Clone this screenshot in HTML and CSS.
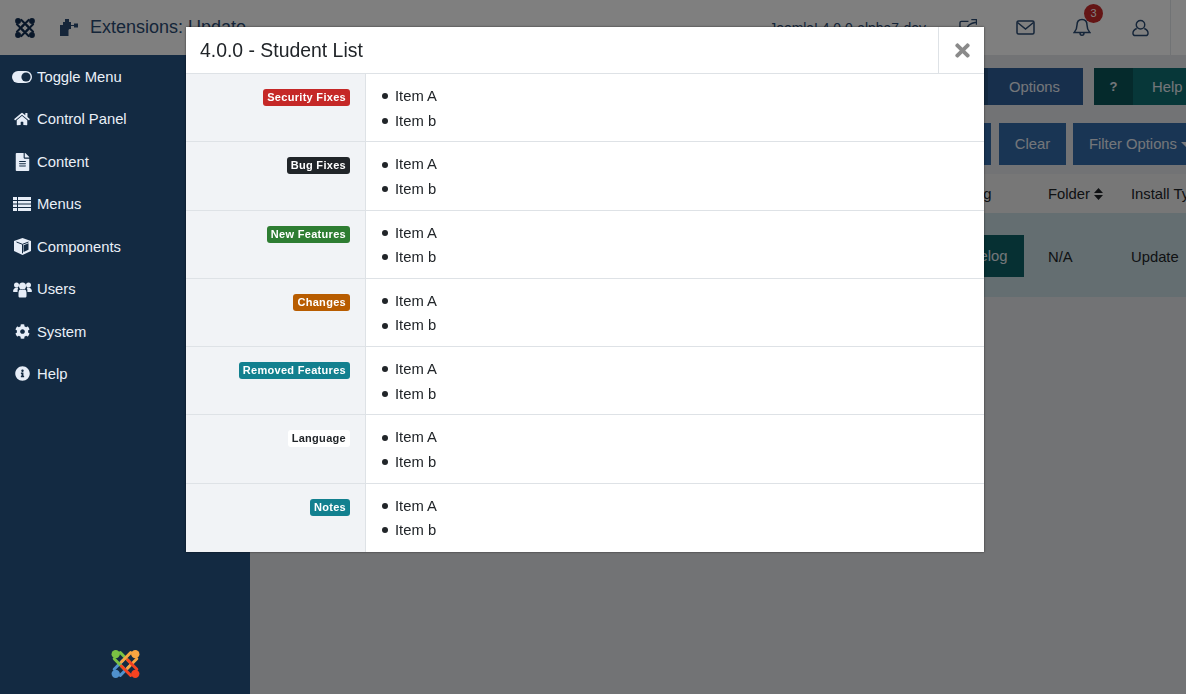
FILE: index.html
```html
<!DOCTYPE html>
<html lang="en">
<head>
<meta charset="utf-8">
<title>Extensions: Update</title>
<link rel="stylesheet" href="styles.css">
</head>
<body>
<svg class="defs" width="0" height="0" aria-hidden="true">
  <symbol id="jlogo" viewBox="0 0 30 30">
    <g fill="none" stroke-width="2.800" stroke-linecap="round">
      <path class="j-d" d="M4 20L13 11M10 26L19 17"/>
      <path class="j-a" d="M10 4L19 13M4 10L13 19"/>
      <path class="j-b" d="M20 4L11 13M26 10L17 19"/>
      <path class="j-c" d="M20 26L11 17M26 20L17 11"/>
    </g>
    <circle class="j-a-dot" cx="5.500" cy="5.500" r="4"/>
    <circle class="j-b-dot" cx="24.500" cy="5.500" r="4"/>
    <circle class="j-c-dot" cx="24.500" cy="24.500" r="4"/>
    <circle class="j-d-dot" cx="5.500" cy="24.500" r="4"/>
  </symbol>
</svg>

<div class="app">
  <header class="topbar">
    <div class="brand"><svg class="logo-mono" width="22" height="22"><use href="#jlogo"/></svg></div>
    <div class="page-title">
      <svg class="puzzle" width="18" height="17" viewBox="0 0 18 17"><path d="M5 0h4v3h2v3h3v-1.500h4v4h-4V7h-3v3h-1c-1 0-1.500.5-1.500 1.500V17H0V6h3V3h2z"/></svg>
      <span>Extensions: Update</span>
    </div>
    <div class="version">Joomla! 4.0.0-alpha7-dev</div>
    <div class="tools">
      <svg class="tool tool-ext" width="18" height="17" viewBox="0 0 19 18"><path d="M10 2.500H2.500A1.500 1.500 0 0 0 1 4v11.500A1.500 1.500 0 0 0 2.500 17h12a1.500 1.500 0 0 0 1.500-1.500V12.500M8 11c.5-3.500 4-6.500 10-7.500M13 .5h5.500V6"/></svg>
      <svg class="tool tool-mail" width="19" height="15" viewBox="0 0 19 15"><rect x="1" y="1" width="17" height="13" rx="1.500"/><path d="M1.500 2.500l8 6.500 8-6.500"/></svg>
      <div class="bell-wrap">
        <svg class="tool" width="18" height="19" viewBox="0 0 18 19"><path d="M9 1.500c-3.500 0-5 2.500-5 5.500 0 4-1 5.500-2.800 7.500h15.600C15 12.500 14 11 14 7c0-3-1.500-5.500-5-5.500zM7 15c0 3 4 3 4 0"/></svg>
        <span class="count">3</span>
      </div>
      <svg class="tool" width="17" height="18" viewBox="0 0 18 18"><circle cx="9" cy="5.500" r="4.500"/><path d="M5 9.500C2.500 10.500 1 12 1 14.500 1 16 2 17 3.500 17h11c1.500 0 2.500-1 2.500-2.500 0-2.500-1.500-4-4-5"/></svg>
      <div class="tool-sep"></div>
    </div>
  </header>

  <div class="body-row">
    <nav class="sidebar">
      <ul class="menu">
        <li class="menu-item"><span class="mi"><svg width="20" height="12" viewBox="0 0 20 12"><rect width="20" height="12" rx="6" class="fill-light"/><circle cx="14" cy="6" r="4.600" class="fill-dark"/></svg></span>Toggle Menu</li>
        <li class="menu-item"><span class="mi"><svg width="16" height="14" viewBox="0 0 576 512"><path class="fill-light" d="M280.37 148.26L96 300.11V464a16 16 0 0 0 16 16l112.06-.29a16 16 0 0 0 15.92-16V368a16 16 0 0 1 16-16h64a16 16 0 0 1 16 16v95.64a16 16 0 0 0 16 16.05L464 480a16 16 0 0 0 16-16V300L295.67 148.26a12.19 12.19 0 0 0-15.3 0zM571.6 251.47L488 182.56V44.05a12 12 0 0 0-12-12h-56a12 12 0 0 0-12 12v72.61L318.47 43a48 48 0 0 0-61 0L4.34 251.47a12 12 0 0 0-1.6 16.9l25.5 31A12 12 0 0 0 45.15 301l235.22-193.74a12.19 12.19 0 0 1 15.3 0L530.9 301a12 12 0 0 0 16.9-1.6l25.5-31a12 12 0 0 0-1.700-16.93z"/></svg></span>Control Panel</li>
        <li class="menu-item"><span class="mi"><svg width="15" height="18" viewBox="0 0 384 512"><path class="fill-light" d="M224 136V0H24C10.7 0 0 10.7 0 24v464c0 13.300 10.700 24 24 24h336c13.300 0 24-10.700 24-24V160H248c-13.200 0-24-10.800-24-24zm64 236c0 6.600-5.400 12-12 12H108c-6.600 0-12-5.400-12-12v-8c0-6.600 5.400-12 12-12h168c6.600 0 12 5.400 12 12v8zm0-64c0 6.600-5.400 12-12 12H108c-6.600 0-12-5.400-12-12v-8c0-6.600 5.400-12 12-12h168c6.600 0 12 5.400 12 12v8zm0-72v8c0 6.600-5.400 12-12 12H108c-6.600 0-12-5.400-12-12v-8c0-6.600 5.400-12 12-12h168c6.600 0 12 5.400 12 12zm96-114.100v6.100H256V0h6.100c6.400 0 12.500 2.500 17 7l97.900 98c4.500 4.500 7 10.600 7 16.900z"/></svg></span>Content</li>
        <li class="menu-item"><span class="mi"><svg width="18" height="14" viewBox="0 0 18 14"><rect width="18" height="14" class="fill-light"/><path class="stroke-dark" d="M0 3.500h18M0 7h18M0 10.500h18M4.500 0v14"/></svg></span>Menus</li>
        <li class="menu-item"><span class="mi"><svg width="17" height="17" viewBox="0 0 17 17"><path class="fill-light" d="M8.500 0L17 3v10l-8.500 4L0 13V3z"/><path class="stroke-dark" d="M2.500 4l6 2.300 6-2.300M8.500 6.300v9"/><path class="fill-dark" d="M9.500 7.200l5-1.900v6.400l-5 2.400z"/></svg></span>Components</li>
        <li class="menu-item"><span class="mi"><svg width="19" height="17" viewBox="0 0 19 17"><g class="fill-light"><circle cx="3.500" cy="4" r="2.500"/><circle cx="15.500" cy="4" r="2.500"/><circle cx="9.500" cy="5" r="3.500"/><path d="M0 11c0-3 1.500-4.500 4-4.500 .5 0 1 .2 1.200 .4-.5 1-.7 2-.6 4.100H1c-.6 0-1-.2-1-.5zM19 11c0-3-1.500-4.500-4-4.500-.5 0-1 .2-1.200 .4 .5 1 .7 2 .6 4.100H18c.6 0 1-.2 1-.5z"/><path d="M5.500 12c0-2.500 1-3.500 2-3.500 1.300 .7 2.700 .7 4 0 1 0 2 1 2 3.500v3c0 1-.7 1.500-1.500 1.500H7c-.8 0-1.500-.5-1.500-1.500z"/></g></svg></span>Users</li>
        <li class="menu-item"><span class="mi"><svg width="15" height="15" viewBox="0 0 512 512"><path class="fill-light" d="M487.400 315.700l-42.600-24.600c4.300-23.200 4.300-47 0-70.200l42.600-24.600c4.900-2.800 7.100-8.600 5.500-14-11.100-35.600-30-67.800-54.700-94.600-3.800-4.100-10-5.100-14.800-2.300L380.800 110c-17.900-15.400-38.500-27.300-60.800-35.100V25.800c0-5.600-3.900-10.500-9.400-11.700-36.700-8.200-74.300-7.800-109.200 0-5.500 1.200-9.400 6.100-9.400 11.700V75c-22.200 7.900-42.800 19.800-60.800 35.100L88.700 85.500c-4.900-2.800-11-1.900-14.800 2.300-24.700 26.700-43.600 58.900-54.700 94.600-1.700 5.400.6 11.200 5.500 14L67.300 221c-4.300 23.200-4.300 47 0 70.200l-42.600 24.600c-4.900 2.800-7.100 8.600-5.500 14 11.100 35.600 30 67.800 54.700 94.600 3.800 4.100 10 5.100 14.800 2.300l42.600-24.600c17.900 15.400 38.500 27.300 60.800 35.100v49.200c0 5.600 3.900 10.500 9.400 11.700 36.700 8.200 74.300 7.800 109.200 0 5.500-1.200 9.400-6.100 9.400-11.700v-49.200c22.200-7.900 42.800-19.800 60.800-35.100l42.600 24.600c4.900 2.800 11 1.900 14.800-2.300 24.700-26.700 43.600-58.900 54.700-94.600 1.500-5.500-.7-11.300-5.600-14.100zM256 336c-44.100 0-80-35.900-80-80s35.900-80 80-80 80 35.900 80 80-35.900 80-80 80z"/></svg></span>System</li>
        <li class="menu-item"><span class="mi"><svg width="15" height="15" viewBox="0 0 512 512"><path class="fill-light" d="M256 8C119.043 8 8 119.083 8 256c0 136.997 111.043 248 248 248s248-111.003 248-248C504 119.083 392.957 8 256 8zm0 110c23.196 0 42 18.804 42 42s-18.804 42-42 42-42-18.804-42-42 18.804-42 42-42zm56 254c0 6.627-5.373 12-12 12h-88c-6.627 0-12-5.373-12-12v-24c0-6.627 5.373-12 12-12h12v-64h-12c-6.627 0-12-5.373-12-12v-24c0-6.627 5.373-12 12-12h64c6.627 0 12 5.373 12 12v100h12c6.627 0 12 5.373 12 12v24z"/></svg></span>Help</li>
      </ul>
      <div class="side-logo"><svg class="logo-color" width="31" height="32"><use href="#jlogo"/></svg></div>
    </nav>

    <main class="content">
      <div class="toolbar">
        <div class="btn btn-options"><span class="btn-icon"></span><span class="btn-text">Options</span></div>
        <div class="btn btn-help"><span class="btn-icon">?</span><span class="btn-text">Help</span></div>
      </div>
      <div class="filters">
        <div class="btn-plain btn-search"></div>
        <div class="btn-plain btn-clear">Clear</div>
        <div class="btn-plain btn-filter">Filter Options<span class="caret"></span></div>
      </div>
      <div class="grid grid-head">
        <div></div>
        <div>Changelog</div>
        <div class="sortable">Folder<svg width="9" height="12" viewBox="0 0 9 12"><path d="M4.500 0L9 5H0zM4.500 12L0 7h9z"/></svg></div>
        <div>Install Type</div>
      </div>
      <div class="grid grid-row">
        <div></div>
        <div><span class="btn-changelog">Changelog</span></div>
        <div class="cell-text">N/A</div>
        <div class="cell-text">Update</div>
      </div>
    </main>
  </div>
</div>

<div class="backdrop"></div>

<section class="modal">
  <div class="modal-head">
    <h3 class="modal-title">4.0.0 - Student List</h3>
    <div class="modal-close"><svg width="15" height="21" viewBox="0 0 352 512"><path d="M242.720 256l100.070-100.070c12.280-12.280 12.280-32.190 0-44.480l-22.240-22.240c-12.280-12.280-32.190-12.280-44.480 0L176 189.280 75.930 89.210c-12.280-12.280-32.190-12.280-44.480 0L9.210 111.450c-12.280 12.280-12.280 32.190 0 44.480L109.280 256 9.210 356.070c-12.280 12.280-12.280 32.190 0 44.480l22.240 22.240c12.280 12.280 32.200 12.280 44.480 0L176 322.720l100.070 100.070c12.280 12.280 32.200 12.280 44.480 0l22.240-22.240c12.280-12.280 12.280-32.190 0-44.480L242.720 256z"/></svg></div>
  </div>
  <div class="log-row">
    <div class="log-label"><span class="badge b-red">Security Fixes</span></div>
    <ul class="log-list"><li>Item A</li><li>Item b</li></ul>
  </div>
  <div class="log-row">
    <div class="log-label"><span class="badge b-black">Bug Fixes</span></div>
    <ul class="log-list"><li>Item A</li><li>Item b</li></ul>
  </div>
  <div class="log-row">
    <div class="log-label"><span class="badge b-green">New Features</span></div>
    <ul class="log-list"><li>Item A</li><li>Item b</li></ul>
  </div>
  <div class="log-row">
    <div class="log-label"><span class="badge b-orange">Changes</span></div>
    <ul class="log-list"><li>Item A</li><li>Item b</li></ul>
  </div>
  <div class="log-row">
    <div class="log-label"><span class="badge b-teal">Removed Features</span></div>
    <ul class="log-list"><li>Item A</li><li>Item b</li></ul>
  </div>
  <div class="log-row">
    <div class="log-label"><span class="badge b-white">Language</span></div>
    <ul class="log-list"><li>Item A</li><li>Item b</li></ul>
  </div>
  <div class="log-row">
    <div class="log-label"><span class="badge b-teal">Notes</span></div>
    <ul class="log-list"><li>Item A</li><li>Item b</li></ul>
  </div>
</section>
</body>
</html>
```

FILE: styles.css
```css
* { box-sizing: border-box; }
html, body { margin: 0; height: 100%; overflow: hidden; }
body {
  font-family: "Liberation Sans", Arial, sans-serif;
  font-size: 14.8px;
  color: #212529;
  background: #e4e6ea;
}
.defs { position: absolute; }
.app { display: flex; flex-direction: column; height: 694px; }

/* logo colours reach the symbol's copies through inherited variables */
.j-a { stroke: var(--ja); }
.j-b { stroke: var(--jb); }
.j-c { stroke: var(--jc); }
.j-d { stroke: var(--jd); }
.j-a-dot { fill: var(--ja); }
.j-b-dot { fill: var(--jb); }
.j-c-dot { fill: var(--jc); }
.j-d-dot { fill: var(--jd); }
.logo-mono { --ja: #132f53; --jb: #132f53; --jc: #132f53; --jd: #132f53; }
.logo-color { --ja: #7ac143; --jb: #f9a541; --jc: #f44321; --jd: #5091cd; }

/* top bar */
.topbar {
  flex: 0 0 55px;
  display: flex;
  align-items: center;
  background: #fff;
}
.brand { width: 50px; display: flex; justify-content: center; }
.page-title { display: flex; align-items: center; gap: 12px; margin-left: 10px; font-size: 18px; color: #2a4a72; }
.puzzle { fill: #2a4a72; }
.version { margin-left: auto; font-size: 13.900px; color: #2a4a72; margin-right: 33px; }
.tools { display: flex; align-items: center; height: 55px; }
.tool { fill: none; stroke: #2a4a72; stroke-width: 1.500; display: block; }
.tool-ext { margin-right: 39px; }
.tool-mail { margin-right: 38px; }
.bell-wrap { position: relative; margin-right: 41px; }
.count {
  position: absolute;
  top: -14px;
  left: 11px;
  width: 19px;
  height: 19px;
  border-radius: 50%;
  background: #c82a2a;
  color: #fff;
  font-size: 11px;
  line-height: 19px;
  text-align: center;
}
.tool-sep { width: 1px; height: 55px; background: #e3e6ea; margin-left: 21px; margin-right: 15px; }

.body-row { flex: 1; display: flex; min-height: 0; }

/* sidebar */
.sidebar {
  flex: 0 0 250px;
  position: relative;
  z-index: 2;
  background: #132a42;
  color: #eaf0f8;
  display: flex;
  flex-direction: column;
}
.menu { list-style: none; margin: 0; padding: .7px 0 0; flex: 1; }
.menu-item { display: flex; align-items: center; height: 42.450px; padding-left: 12px; }
.mi { width: 20px; margin-right: 5px; display: flex; align-items: center; justify-content: center; flex: none; }
.fill-light { fill: #e6edf7; }
.fill-dark { fill: #132a42; }
.stroke-dark { stroke: #132a42; fill: none; stroke-width: 1; }
.side-logo { display: flex; justify-content: center; padding-bottom: 14px; }

/* page content behind the dialog */
.content { flex: 1; min-width: 0; background: #e4e6ea; overflow: hidden; padding-top: 13px; }
.toolbar { display: flex; height: 37px; padding-left: 695px; gap: 11px; }
.btn { display: flex; flex: none; color: #e8edf4; }
.btn-icon { display: flex; align-items: center; justify-content: center; font-weight: 700; font-size: 13px; }
.btn-text { display: flex; align-items: center; justify-content: center; }
.btn-options { background: #2f5f99; width: 138px; }
.btn-options .btn-icon { width: 43px; background: #27507f; }
.btn-options .btn-text { flex: 1; padding-right: 2px; }
.btn-help { background: #0f6f72; width: 110px; }
.btn-help .btn-icon { width: 39px; background: #0a5559; }
.btn-help .btn-text { flex: 1; padding-left: 19px; justify-content: flex-start; }
.filters { display: flex; height: 42px; margin-top: 18px; padding-left: 677px; gap: 8px; }
.btn-plain { display: flex; align-items: center; background: #326aa8; color: #e8edf4; flex: none; justify-content: center; }
.btn-search { width: 64px; }
.btn-clear { width: 67px; }
.btn-filter { width: 130px; margin-left: -1px; justify-content: flex-start; padding-left: 16px; }
.caret { border: 5px solid transparent; border-top-color: #e8edf4; border-bottom: 0; margin-left: 4px; }
.grid { display: grid; grid-template-columns: 670px 128px 83px 1fr; align-items: center; white-space: nowrap; }
.grid-head { height: 39px; margin-top: 9px; background: #efefef; }
.sortable { display: flex; align-items: center; gap: 4px; }
.sortable svg { fill: #212529; }
.grid-row { height: 84px; background: #c9dde3; padding-top: 2px; }
.cell-text { padding-top: 2px; }
.btn-changelog { display: inline-flex; align-items: center; height: 42px; padding: 0 16px; background: #0c6166; color: #e8edf4; }

/* dialog */
.backdrop { position: fixed; inset: 0; background: rgba(0, 0, 0, .5); z-index: 1; }
.modal {
  position: absolute;
  left: 186px;
  top: 27px;
  width: 798px;
  background: #fff;
  z-index: 3;
  box-shadow: 0 0 2px rgba(0, 0, 0, .6);
}
.modal-head { display: flex; align-items: stretch; height: 47.150px; border-bottom: 1px solid #dee2e6; }
.modal-title { flex: 1; margin: 0; padding-left: 14px; align-self: center; font-size: 19.400px; font-weight: 400; color: #212529; }
.modal-close { width: 46px; border-left: 1px solid #dee2e6; display: flex; align-items: center; justify-content: center; padding-left: 1px; }
.modal-close svg { fill: #8a8a8a; }
.log-row { display: flex; height: 68.250px; border-bottom: 1px solid #dee2e6; }
.log-row:last-child { border-bottom: 0; }
.log-label { flex: 0 0 180px; background: #f1f3f6; border-right: 1px solid #dee2e6; padding: 15px 15px 0 0; text-align: right; }
.badge {
  display: inline-block;
  height: 17px;
  padding: 0 4px;
  border-radius: 3px;
  font-size: 11px;
  font-weight: 700;
  letter-spacing: .3px;
  line-height: 17px;
  color: #fff;
  vertical-align: top;
}
.b-red { background: #c52827; }
.b-black { background: #212529; }
.b-green { background: #2e7d32; }
.b-orange { background: #b85c00; }
.b-teal { background: #12808f; }
.b-white { background: #fff; color: #212529; }
.log-list { list-style: none; margin: 0; padding: 10px 0 0 16px; line-height: 24.500px; }
.log-list li { display: flex; align-items: center; gap: 7px; }
.log-list li::before { content: ""; width: 6px; height: 6px; border-radius: 50%; background: #212529; flex: none; }
```
